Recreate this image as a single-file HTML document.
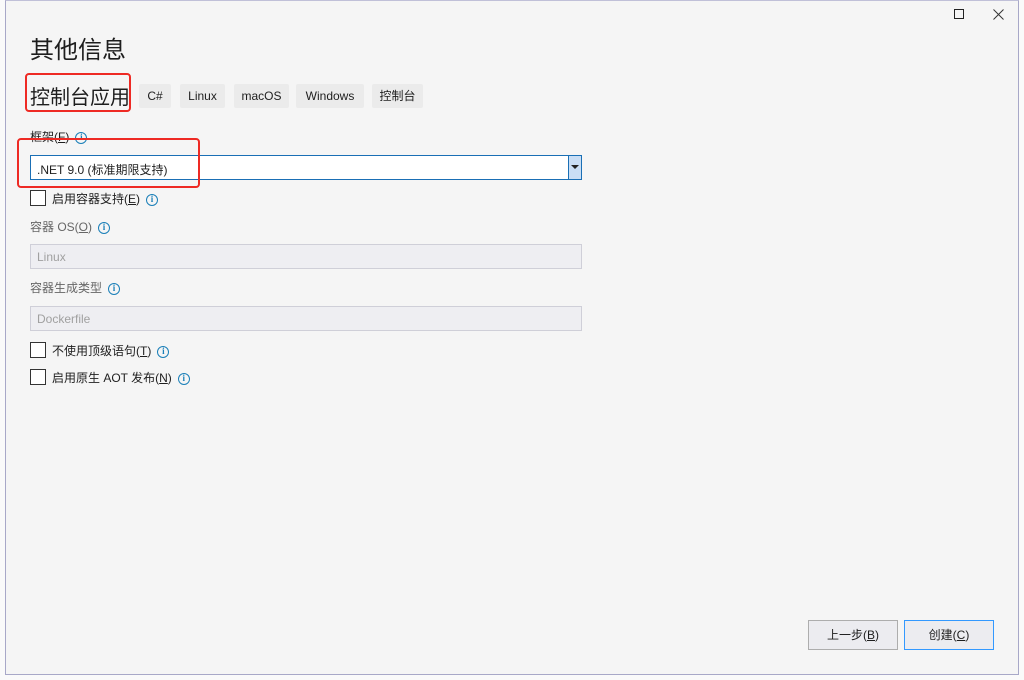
<!DOCTYPE html>
<html><head><meta charset="utf-8"><style>
*{margin:0;padding:0;box-sizing:border-box}
body{width:1024px;height:680px;background:#fafafa;position:relative;overflow:hidden;font-family:"Liberation Sans","Noto Sans CJK SC",sans-serif;color:#1e1e1e}
.win{position:absolute;left:5px;top:0;width:1014px;height:675px;background:#f5f5f5;border:1px solid #a8a8c8;border-top:1px solid #c0c0d8}
.a{position:absolute;white-space:nowrap}
.tag{position:absolute;top:84px;height:24px;background:#ebebeb;border-radius:2px;font-size:12px;line-height:24px;text-align:center}
.red{position:absolute;border:2px solid #ee2a24;border-radius:4px}
.sel{position:absolute;left:30px;width:552px;height:25px}
.cb{position:absolute;left:30px;width:16px;height:16px;border:1px solid #333;background:#fff}
.lbl{font-size:12px}
.i{display:inline-block;width:12px;height:12px;border-radius:50%;border:1.5px solid #1a7fb8;color:#1a7fb8;font-size:9px;line-height:9px;text-align:center;font-weight:bold;vertical-align:middle;margin-left:6px;font-family:"Liberation Serif",serif}
.btn{position:absolute;top:620px;width:90px;height:30px;background:#ececf0;border:1px solid #adadad;font-size:12px;line-height:28px;text-align:center}
</style></head><body>
<div class="win"></div>
<div class="a" style="left:954px;top:9px;width:10px;height:10px;border:1px solid #222"></div>
<svg class="a" style="left:993px;top:9px" width="11" height="11"><path d="M0.5 0.5L10.5 10.5M10.5 0.5L0.5 10.5" stroke="#333" stroke-width="1"/></svg>
<div class="a" style="left:30px;top:30px;font-size:24px">其他信息</div>
<div class="a" style="left:30px;top:81px;font-size:20px">控制台应用</div>
<div class="red" style="left:25px;top:73px;width:106px;height:39px"></div>
<div class="tag" style="left:139px;width:32px">C#</div>
<div class="tag" style="left:180px;width:45px">Linux</div>
<div class="tag" style="left:234px;width:55px">macOS</div>
<div class="tag" style="left:296px;width:68px">Windows</div>
<div class="tag" style="left:372px;width:51px">控制台</div>
<div class="a lbl" style="left:30px;top:128px">框架(<u>F</u>)<span class="i">i</span></div>
<div class="sel" style="top:155px;background:#fff;border:1px solid #1a6fb5"><span class="a lbl" style="left:6px;top:5px">.NET 9.0 (标准期限支持)</span><div class="a" style="right:0;top:0;width:13px;height:23px;background:#c9def5;border-left:1px solid #1a6fb5"><span class="a" style="left:2px;top:9px;border:4px solid transparent;border-top:4px solid #222;border-bottom:0"></span></div></div>
<div class="red" style="left:17px;top:138px;width:183px;height:50px"></div>
<div class="cb" style="top:190px"></div><div class="a lbl" style="left:52px;top:190px">启用容器支持(<u>E</u>)<span class="i">i</span></div>
<div class="a lbl" style="left:30px;top:218px;color:#666">容器 OS(<u>O</u>)<span class="i">i</span></div>
<div class="sel" style="top:244px;background:#eeeef2;border:1px solid #cfcfd8"><span class="a lbl" style="left:6px;top:5px;color:#a0a0a0">Linux</span></div>
<div class="a lbl" style="left:30px;top:279px;color:#666">容器生成类型<span class="i">i</span></div>
<div class="sel" style="top:306px;background:#eeeef2;border:1px solid #cfcfd8"><span class="a lbl" style="left:6px;top:5px;color:#a0a0a0">Dockerfile</span></div>
<div class="cb" style="top:342px"></div><div class="a lbl" style="left:52px;top:342px">不使用顶级语句(<u>T</u>)<span class="i">i</span></div>
<div class="cb" style="top:369px"></div><div class="a lbl" style="left:52px;top:369px">启用原生 AOT 发布(<u>N</u>)<span class="i">i</span></div>
<div class="btn" style="left:808px">上一步(<u>B</u>)</div>
<div class="btn" style="left:904px;border-color:#3399ff">创建(<u>C</u>)</div>
</body></html>
